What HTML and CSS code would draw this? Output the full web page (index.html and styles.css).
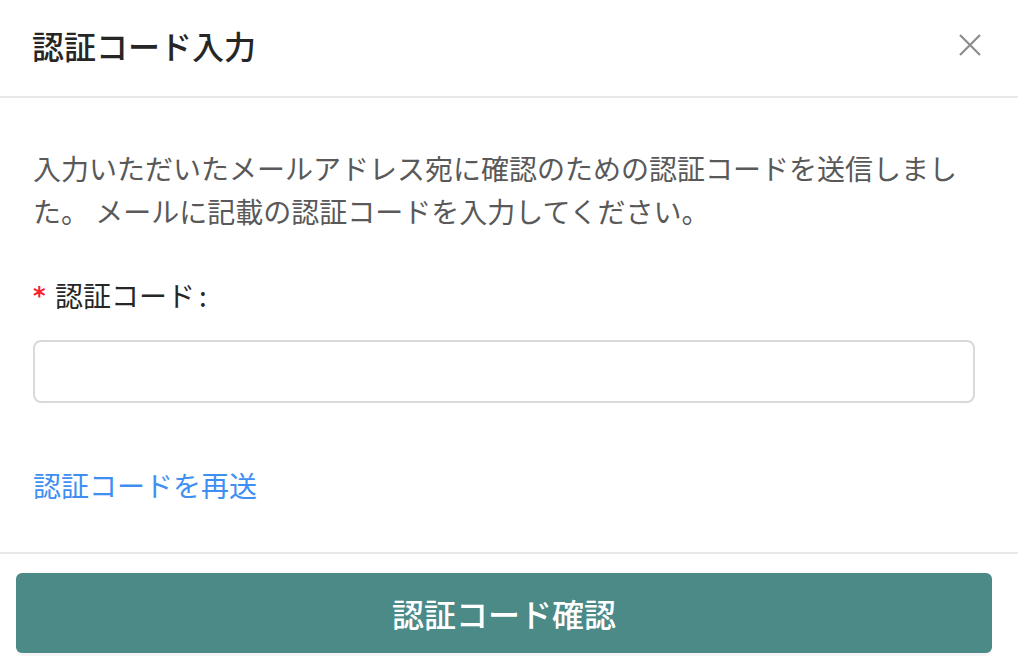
FILE: index.html
```html
<!DOCTYPE html>
<html lang="ja">
<head>
<meta charset="utf-8">
<title>認証コード入力</title>
<link rel="stylesheet" href="styles.css">
</head>
<body>
<div class="modal">
  <div class="header">
    <div class="title">認証コード入力</div>
    <button class="close" aria-label="閉じる">
      <svg width="24" height="24" viewBox="0 0 24 24"><path d="M2 2 L22 22 M22 2 L2 22" stroke="#8c8c8c" stroke-width="2.2" fill="none"/></svg>
    </button>
  </div>
  <div class="body">
    <p class="desc">入力いただいたメールアドレス宛に確認のための認証コードを送信しました。 メールに記載の認証コードを入力してください。</p>
    <div class="label"><span class="req">*</span>認証コード<span class="colon">:</span></div>
    <input class="input" type="text">
    <a class="link" href="#">認証コードを再送</a>
  </div>
  <div class="footer">
    <button class="submit">認証コード確認</button>
  </div>
</div>
</body>
</html>
```
FILE: styles.css
```css
html, body {
  margin: 0;
  padding: 0;
  background: #ffffff;
}
body {
  font-family: "Noto Sans CJK JP", "Noto Sans", sans-serif;
}
.modal {
  width: 1018px;
  display: flex;
  flex-direction: column;
}
.header {
  padding: 0 36px 0 32px;
  display: flex;
  align-items: center;
  justify-content: space-between;
  border-bottom: 2px solid #e8e8e8;
  box-sizing: border-box;
  height: 98px;
}
.title {
  font-size: 32px;
  line-height: 40px;
  font-weight: 500;
  color: #262626;
  margin-top: -6px;
}
.close {
  border: 0;
  background: none;
  padding: 0;
  width: 24px;
  height: 24px;
  margin-top: -6px;
  display: flex;
}
.body {
  padding: 49px 43px 0 33px;
  display: flex;
  flex-direction: column;
  align-items: flex-start;
}
.desc {
  margin: 0;
  font-size: 28px;
  line-height: 43px;
  color: #595959;
}
.label {
  margin-top: 41px;
  font-size: 28px;
  line-height: 40px;
  color: #262626;
  display: flex;
  align-items: center;
}
.req {
  color: #f5222d;
  font-family: "DejaVu Sans", sans-serif;
  font-size: 24px;
  font-weight: bold;
  width: 14px;
  margin-right: 8px;
  margin-top: 2px;
}
.colon {
  margin-left: 4px;
}
.input {
  margin-top: 24px;
  width: 100%;
  height: 63px;
  box-sizing: border-box;
  border: 2px solid #d9d9d9;
  border-radius: 8px;
  background: #fff;
  font-size: 28px;
  padding: 0 20px;
  outline: none;
}
.link {
  margin-top: 62px;
  font-size: 28px;
  line-height: 40px;
  color: #3f8ff3;
  text-decoration: none;
}
.footer {
  margin-top: 47px;
  border-top: 2px solid #e8e8e8;
  padding: 19px 26px 16px 16px;
}
.submit {
  width: 100%;
  height: 80px;
  border: 0;
  border-radius: 6px;
  background: #4b8a87;
  color: #ffffff;
  font-family: "Noto Sans CJK JP", "Noto Sans", sans-serif;
  font-size: 32px;
  font-weight: 500;
  box-shadow: 0 3px 0 rgba(0, 0, 0, 0.04);
}
```
